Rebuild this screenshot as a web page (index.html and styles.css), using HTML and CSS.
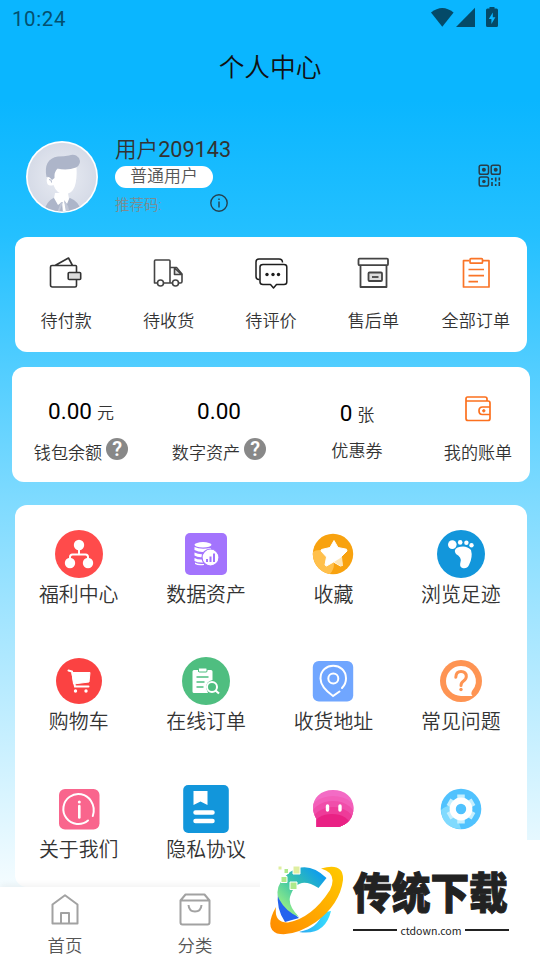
FILE: index.html
```
<!DOCTYPE html>
<html lang="zh-CN">
<head>
<meta charset="utf-8">
<title>个人中心</title>
<link rel="stylesheet" href="styles.css">
</head>
<body>
<div class="page">
  <header class="status">
    <span class="time">10:24</span>
    <svg class="status-icons" width="68" height="22" viewBox="0 0 68 22" fill="#044a68"><path d="M0 5.6Q11.300-3.500 22.600 5.600L11.300 19.800Z"/><path d="M44 0.800V20H25Z"/><path fill-rule="evenodd" d="M58.500 1.500V0h5v1.500h2q1.500 0 1.500 1.500v15.500q0 1.500-1.500 1.500h-9q-1.500 0-1.500-1.500V3q0-1.500 1.500-1.500ZM61.800 5.500L57.800 12h2.600v5l4-6.700h-2.600Z"/></svg>
  </header>
  <h1 class="title">个人中心</h1>

  <section class="profile">
    <svg class="avatar" width="72" height="72" viewBox="0 0 72 72">
      <defs><clipPath id="face"><circle cx="36" cy="36" r="34.500"/></clipPath><radialGradient id="avbg"><stop offset="0" stop-color="#e9ecf3"/><stop offset="1" stop-color="#d6dbe7"/></radialGradient></defs>
      <circle cx="36" cy="36" r="36" fill="#fff"/><circle cx="36" cy="36" r="34.300" fill="url(#avbg)"/>
      <g clip-path="url(#face)">
        <path d="M18 72Q19 61 29 56L36 62L44 57Q53 60 56 72Z" fill="#adb5c9"/>
        <path d="M29 52H42L43 58L41 63L38 59L41 72H37L36 61L32 64L28 57Z" fill="#fff"/>
        <path d="M37 61L33 72H31L35 61ZM38 59L42 65L44 72H40Z" fill="#c1c7d7"/>
        <path d="M29 28Q40 29 50.500 25.500Q52 52 40 53Q31 54 27.500 44Q21 46 20.700 40Q20.500 35 25 36Q29 33 29 28Z" fill="#fff"/>
        <path d="M20.500 36Q17 18 32 15.500Q38 15.500 43 14.500Q49 12 53 17Q56 23 50 26.500Q41 30 31.500 27.500Q28 31 28.500 37L26 39Q23 35 20.500 36Z" fill="#adb5c9"/>
        <path d="M23 38.500q3 0 2.500 3" fill="none" stroke="#adb5c9"/>
      </g>
    </svg>
    <div class="who">
      <div class="name">用户<span>209143</span></div>
      <div class="level">普通用户</div>
      <div class="invite"><span>推荐码:</span>
        <svg width="18" height="18" viewBox="0 0 18 18" fill="none" stroke="#26414e" stroke-width="1.400"><circle cx="9" cy="9" r="8.200"/><path d="M9 4.500v1.600M9 7.500v6"/></svg>
      </div>
    </div>
    <svg class="qr" width="24" height="24" viewBox="0 0 24 24" fill="none" stroke="#293d48" stroke-width="1.500"><rect x="1.200" y="1.200" width="9.300" height="9" rx="1.800"/><rect x="13.200" y="1.200" width="9" height="9" rx="1.800"/><rect x="1.200" y="13" width="9.300" height="9" rx="1.800"/><g fill="#293d48" stroke="none"><circle cx="5.900" cy="5.700" r="2"/><circle cx="17.700" cy="5.700" r="2"/><circle cx="5.900" cy="17.500" r="1.800"/></g><path d="M14 14v2M14 18v4M17.700 13.500v4M17.700 20v2M21.300 13.500v3M21.300 18v4" stroke-width="1.600"/></svg>
  </section>

  <section class="card orders">
    <div class="order"><svg width="40" height="40" viewBox="0 0 40 40" fill="none" stroke="#333" stroke-width="1.600" stroke-linejoin="round"><path d="M30.500 18V12.500Q30.500 11.500 29.500 11.500H6Q4.500 11.500 4.500 13V31Q4.500 33 6.500 33H29Q30.500 33 30.500 31.500V26M9 11.500L22.500 4L26.500 11.500"/><rect x="22.200" y="18.500" width="12.500" height="7" rx="1" fill="#ddd"/></svg><span>待付款</span></div>
    <div class="order"><svg width="40" height="40" viewBox="0 0 40 40" fill="none" stroke="#444" stroke-width="1.600" stroke-linejoin="round"><path d="M8.500 29H5.500V7Q5.500 6 6.500 6H20Q21 6 21 7V29H14.500M21 13.500H27.500L33 20V27.500Q33 29 31.500 29H30M23.500 29H21"/><path d="M25.500 14V20.500H32.500Z" fill="#ddd"/><circle cx="11.500" cy="29" r="3"/><circle cx="26.500" cy="29" r="3"/></svg><span>待收货</span></div>
    <div class="order"><svg width="40" height="40" viewBox="0 0 40 40" fill="none" stroke="#1d1d1d" stroke-width="1.500" stroke-linejoin="round"><path d="M8.500 25.500H8Q5 25.500 5 22.500V8Q5 5 8 5H28Q31.500 5 31.500 8.500"/><path d="M12 10.500H33Q35.800 10.500 35.800 13V28Q35.800 30.500 33 30.500H25.500L22.500 34L19.500 30.500H12Q9 30.500 9 28V13Q9 10.500 12 10.500Z"/><g fill="#1d1d1d" stroke="none"><circle cx="16" cy="20.500" r="1.700"/><circle cx="22" cy="20.500" r="1.700"/><circle cx="27.500" cy="20.500" r="1.700"/></g></svg><span>待评价</span></div>
    <div class="order"><svg width="40" height="40" viewBox="0 0 40 40" fill="none" stroke="#444" stroke-width="1.800" stroke-linejoin="round"><rect x="5.500" y="4.700" width="29.500" height="6.500" rx="1"/><path d="M7.500 11.500V33H33.500V11.500"/><rect x="15.500" y="18.500" width="13.500" height="8.500" rx="1" fill="#ddd"/><path d="M19 23H25.500"/></svg><span>售后单</span></div>
    <div class="order"><svg width="40" height="40" viewBox="0 0 40 40" fill="none" stroke="#fa7427" stroke-width="1.700" stroke-linejoin="round"><path d="M13 6.700H7.500V33H33V6.700H27"/><rect x="14" y="4.700" width="12.500" height="4.500" rx="1"/><path d="M12.500 15.500H28M12.500 21.700H28M12.500 27.700H22"/></svg><span>全部订单</span></div>
  </section>

  <section class="card wallet">
    <div class="asset"><div class="amount"><b>0.00</b><i>元</i></div><div class="caption">钱包余额<em>?</em></div></div>
    <div class="asset"><div class="amount"><b>0.00</b></div><div class="caption">数字资产<em>?</em></div></div>
    <div class="asset coupon"><div class="amount"><b>0</b><i>张</i></div><div class="caption">优惠券</div></div>
    <div class="asset"><div class="amount bill"><svg width="28" height="28" viewBox="0 0 28 28" fill="none" stroke="#fc701e" stroke-width="1.700" stroke-linejoin="round"><path d="M23 6V3.800Q23 2 21 2H3.500Q2 2 2 4V23.500Q2 25.500 4 25.500H24Q26 25.500 26 23.500V8Q26 6 24 6H2.500M26 12H18.500Q15 12 15 15.800T18.500 19.500H26"/><circle cx="19.800" cy="15.800" r="1.200" fill="#fc701e" stroke-width="1"/></svg></div><div class="caption">我的账单</div></div>
  </section>

  <section class="card menu">
    <div class="item"><svg viewBox="0 0 48 48"><circle cx="24" cy="24" r="24" fill="#ff4b4b"/><path d="M24 15V24M15 32V27Q15 24.500 17.500 24.500H30.500Q33 24.500 33 27V32" fill="none" stroke="#fff" stroke-width="2"/><g fill="#fff"><circle cx="24" cy="15" r="5.200"/><circle cx="15" cy="33" r="5.200"/><circle cx="33" cy="33" r="5.200"/></g></svg><span>福利中心</span></div>
    <div class="item"><svg viewBox="0 0 48 48"><rect x="3" y="3" width="42" height="42" rx="5" fill="#a374fd"/><g fill="#fff"><ellipse cx="21" cy="14.800" rx="8.500" ry="2.700"/><path d="M12.500 17Q18 20 29 18V20Q20 24 12.500 20ZM12.500 22.500Q17 25 23 24L22 27Q16 28 12.500 25.500ZM12.500 28Q16 30 21 29.500V32.500Q16 33 12.500 31ZM13 32.500Q16 34 22 34V35Q16 36 13 34Z"/><circle cx="28.500" cy="27.500" r="8.500" stroke="#a374fd" stroke-width="1.200"/></g><path d="M25 29V32M28.500 26.500V32M32 23.500V32" stroke="#a374fd" stroke-width="2"/></svg><span>数据资产</span></div>
    <div class="item"><svg viewBox="0 0 48 48"><defs><clipPath id="coin"><circle cx="24" cy="24" r="20.200"/></clipPath></defs><circle cx="24" cy="24" r="20.200" fill="#f8a20f"/><circle cx="11" cy="34" r="14" fill="#ffc04c" clip-path="url(#coin)"/><path d="M25 10.500L29 17.500L37.500 19.200L38 21L32 27L33 35.500L31.500 36L24.500 32L17.500 36L16 35L17.500 27L12 21L12.500 19.500L21 17.500Z" fill="#fff" stroke="#fff" stroke-linejoin="round"/><path d="M25 32L33 27L34 36H31.500Z" fill="#fee5b5"/></svg><span>收藏</span></div>
    <div class="item"><svg viewBox="0 0 48 48"><circle cx="24" cy="24" r="24" fill="#1296db"/><g fill="#fff"><circle cx="15.300" cy="14.600" r="4.300"/><circle cx="23.200" cy="12.400" r="2.300"/><circle cx="29.400" cy="12.800" r="2.200"/><circle cx="34.500" cy="15.300" r="2.200"/><path d="M19 24Q16 20 20.500 17.500Q29 14.500 34 20Q36 27 32 35Q30 39 25.500 38Q22 37 23.500 32Q25 27.500 19 24Z"/></g></svg><span>浏览足迹</span></div>

    <div class="item"><svg viewBox="0 0 48 48"><circle cx="24" cy="24" r="23" fill="#fb4242"/><path d="M13.500 13.500L17 14.500L20 29.500H33.500" fill="none" stroke="#fff" stroke-width="2" stroke-linecap="round"/><path d="M17 15.500H35L34 25L18.500 27Z" fill="#fff" stroke="#fff" stroke-linejoin="round"/><circle cx="20.500" cy="34" r="1.700" fill="#fff"/><circle cx="31" cy="34" r="1.700" fill="#fff"/></svg><span>购物车</span></div>
    <div class="item"><svg viewBox="0 0 48 48"><circle cx="24" cy="24" r="24" fill="#4fbe80"/><path d="M12 13H16V15H25V13H29Q30.500 13 30.500 14.500V23Q24 24 24 31L26 36H12Q10.500 36 10.500 34.500V14.500Q10.500 13 12 13Z" fill="#fff"/><rect x="16.500" y="11" width="8.500" height="4" rx="1" fill="#fff" stroke="#4fbe80"/><path d="M14.500 20H26.500M14.500 25H22.500M14.500 30H21.500" stroke="#4fbe80" stroke-width="1.700"/><circle cx="30" cy="30" r="5" fill="#4fbe80" stroke="#fff" stroke-width="2"/><path d="M33.500 33.500L37 36.500" stroke="#fff" stroke-width="2.200"/></svg><span>在线订单</span></div>
    <div class="item"><svg viewBox="0 0 48 48" fill="none" stroke="#fff" stroke-width="2"><rect x="3.800" y="4" width="40.400" height="40.500" rx="6" fill="#70a6ff" stroke="none"/><path d="M33 31Q37 27 37 21.500C37 4.500 11.500 4.500 11.500 21.500Q11.500 30 24 39L30.500 34.500" stroke-linecap="round"/><circle cx="24.300" cy="21.500" r="5"/></svg><span>收货地址</span></div>
    <div class="item"><svg viewBox="0 0 48 48"><circle cx="24" cy="24" r="21" fill="#fe9453"/><path d="M24 9A15 15 0 1 0 24 39H35.500Q33.500 37 35 34A15 15 0 0 0 24 9Z" fill="#fff"/><path d="M18.800 20.300Q19 14.500 24 14.500Q29.300 14.500 29.300 19.500Q29.300 22 26.500 24Q24 25.700 24 28.500" fill="none" stroke="#fe9453" stroke-width="3" stroke-linecap="round"/><circle cx="24" cy="32.500" r="1.700" fill="#fe9453"/></svg><span>常见问题</span></div>

    <div class="item"><svg viewBox="0 0 48 48"><rect x="4" y="4" width="40.500" height="40.500" rx="6" fill="#f9658d"/><path d="M37.800 31Q40.500 23 36 16A15 15 0 1 0 33 35.500" fill="none" stroke="#fff" stroke-width="2" stroke-linecap="round"/><path d="M24.300 21V32.500" stroke="#fff" stroke-width="2.600" stroke-linecap="round"/><circle cx="24.300" cy="17" r="1.500" fill="#fff"/></svg><span>关于我们</span></div>
    <div class="item"><svg viewBox="0 0 48 48"><rect x="1.200" y="0" width="45.600" height="48" rx="5" fill="#1296db"/><path d="M11.500 6H25.500V20L18.500 16.500L11.500 20Z" fill="#fff"/><path d="M13.500 27.500H30.500M13.500 36H30.500" stroke="#fff" stroke-width="4.500" stroke-linecap="round"/></svg><span>隐私协议</span></div>
    <div class="item"><svg viewBox="0 0 48 48"><defs><clipPath id="bubble"><path d="M24 5C36 5 44.500 12 44.500 23Q44.500 37 30 42H7.500V34C-1 20 7 5 24 5Z"/></clipPath></defs><g clip-path="url(#bubble)"><path fill="#f36bc5" d="M0 0H48V48H0Z"/><ellipse cx="24" cy="31" rx="25" ry="20" fill="#f35fb9"/><ellipse cx="24" cy="34" rx="23" ry="18" fill="#f04eaa"/><ellipse cx="24" cy="37" rx="21" ry="15" fill="#ee3b99"/><ellipse cx="23" cy="40" rx="18" ry="11" fill="#e92184"/></g><path d="M18.500 21V25M31 21V25" stroke="#fff" stroke-width="3.400" stroke-linecap="round"/></svg><span></span></div>
    <div class="item"><svg viewBox="0 0 48 48"><circle cx="24" cy="24" r="20.300" fill="#50c2fe"/><path d="M4 25Q10 20 15 21Q21 33 24 44Q5 43 4 25Z" fill="#80dafe"/><g stroke="#c6effe" stroke-width="7.500"><path d="M24 9.500V38.500M11.500 16.800L36.500 31.200M11.500 31.200L36.500 16.800"/></g><circle cx="24" cy="24" r="8.300" fill="#50c2fe" stroke="#fff" stroke-width="6.200"/></svg><span></span></div>
  </section>

  <nav class="tabs">
    <div class="tab"><svg width="36" height="36" viewBox="0 0 36 36" fill="none" stroke="#a2a2a2" stroke-width="2" stroke-linejoin="round"><path d="M5.500 12.500L18 3.300L30.500 12.500V31.500H5.500ZM14 31V21H22V31"/></svg><span>首页</span></div>
    <div class="tab"><svg width="36" height="36" viewBox="0 0 36 36" fill="none" stroke="#a2a2a2" stroke-width="2" stroke-linejoin="round"><path d="M3.500 8.500L8.500 2.500H27.500L32.500 8.500V30.500Q32.500 32.500 30.500 32.500H5.500Q3.500 32.500 3.500 30.500ZM3.500 8.500H32.500M11.500 13Q12 19.500 18 19.500T24.500 13"/></svg><span>分类</span></div>
  </nav>

  <aside class="brand">
    <svg class="brand-logo" width="76" height="72" viewBox="0 0 76 72">
      <defs><linearGradient id="ring" x1="0" y1="1" x2="1" y2="0"><stop stop-color="#ff8a00"/><stop offset="1" stop-color="#ffca00"/></linearGradient><linearGradient id="cee" x1="0" y1="1" x2="1" y2="0"><stop offset=".15" stop-color="#94ed87"/><stop offset=".5" stop-color="#39c4a8"/><stop offset=".9" stop-color="#0b9af2"/></linearGradient><linearGradient id="tail"><stop stop-color="#2ca6f0"/><stop offset="1" stop-color="#38e1ff"/></linearGradient></defs>
      <path d="M29 66Q48 62 52 48Q57 45 61 45Q55 70 29 66Z" fill="url(#tail)"/>
      <path d="M8 26Q6 43 15 56L29 52Q16 42 8 26Z" fill="#2463ee"/>
      <path d="M56.500 12Q38-6 20 6Q3 20 9 33Q16 46 29 51Q18 40 20 31Q27 8 48.500 22Z" fill="url(#cee)"/>
      <path d="M51 2.500Q74-4 73 14Q70 38 46 56Q24 71 7 67.500Q-6 62 6 41Q4 57 18 56.500Q42 52 60 24Q68 7 51 2.500Z" fill="url(#ring)"/>
      <g stroke="#fff" stroke-width="1"><path d="M23 0H30V8H23Z" fill="#dfeea0"/><path d="M14 2.500H18.500V7.500H14ZM11 10.500H17V16.500H11ZM20 16H27V23.500H20Z" fill="#aee98b"/><path d="M8 0H12V4H8Z" fill="#dfeea0"/></g>
    </svg>
    <div class="brand-copy"><div class="brand-name">传统下载</div><div class="brand-site">ctdown.com</div></div>
  </aside>
</div>
</body>
</html>
```
FILE: styles.css
```
* { box-sizing: border-box; }
body { margin: 0; font-family: Roboto, "Noto Sans CJK SC", sans-serif; font-weight: 350; color: #333; }
svg { display: block; flex: none; }
.page { position: relative; width: 540px; height: 960px; overflow: hidden; background: linear-gradient(#0ab6ff 100px, #24c0ff 235px, #80dbff 505px, #f4fcff 886px); }
.status { height: 36px; padding: 2px 41px 0 12px; display: flex; justify-content: space-between; align-items: center; }
.time { font-size: 20.5px; font-weight: 450; letter-spacing: .6px; color: #04506f; }
.status-icons { margin-top: -2px; }
.title { margin: 0; height: 62px; padding-top: 1px; line-height: 62px; text-align: center; font-size: 25.7px; font-weight: 350; color: #111; }
.profile { height: 139px; padding: 38px 38px 0 26px; display: flex; align-items: flex-start; }
.avatar { margin-top: 5px; }
.who { margin-left: 17px; flex: 1; }
.name { height: 30px; line-height: 28px; font-size: 21.6px; }
.name span { font-weight: 400; }
.level { width: 98px; height: 22px; line-height: 20px; border-radius: 11px; background: #fff; text-align: center; font-size: 16.9px; color: #555; }
.invite { width: 113px; height: 30px; display: flex; align-items: center; justify-content: space-between; font-size: 14.5px; color: #7e8b8f; }
.qr { margin-top: 28px; }
.card { background: #fff; border-radius: 12px; }
.orders { height: 115px; margin: 0 13px 0 15px; padding-top: 17px; display: grid; grid-template-columns: repeat(5, 1fr); }
.order { display: flex; flex-direction: column; align-items: center; font-size: 17.1px; line-height: 26px; }
.order svg { margin-bottom: 14px; }
.wallet { height: 115px; margin: 15px 10px 0 12px; padding-top: 27px; display: grid; grid-template-columns: 138px 138px 138px 1fr; }
.asset { display: flex; flex-direction: column; align-items: center; }
.amount { height: 34px; display: flex; align-items: center; gap: 5px; }
.amount b { font-size: 22.5px; font-weight: 400; color: #000; }
.amount i { font-size: 17px; font-style: normal; }
.bill { padding-bottom: 5px; }
.coupon .amount { padding-top: 4px; }
.coupon .caption { padding-bottom: 3px; }
.caption { height: 46px; display: flex; align-items: center; gap: 4px; font-size: 17.1px; }
.caption em { width: 22px; height: 22px; margin-top: -4px; line-height: 22px; border-radius: 50%; background: #888; color: #fff; text-align: center; font-style: normal; font-weight: 600; font-size: 20px; }
.menu { height: 382px; margin: 23px 13px 0 15px; padding-top: 25px; display: grid; grid-template-columns: repeat(4, 127.4px); grid-auto-rows: 127.4px; align-content: start; }
.item { display: flex; flex-direction: column; align-items: center; font-size: 19.9px; line-height: 36px; }
.item svg { width: 48px; height: 48px; }
.tabs { height: 73px; display: flex; background: #fff; box-shadow: 0 -2px 7px rgba(0, 0, 0, .06); position: relative; }
.tab { width: 130px; padding-top: 5px; display: flex; flex-direction: column; align-items: center; font-size: 17.4px; line-height: 36px; color: #555; }
.brand { position: absolute; right: 0; bottom: 0; width: 280px; height: 120px; padding: 26px 0 0 10px; display: flex; background: #fff; }
.brand-copy { width: 156px; margin-left: 7px; }
.brand-name { width: 170px; height: 52px; line-height: 49px; font-family: "Noto Sans CJK SC", sans-serif; font-size: 43px; font-weight: 900; color: #222; -webkit-text-stroke: 1px #222; transform: scaleX(.9); transform-origin: left; white-space: nowrap; }
.brand-site { display: flex; align-items: center; gap: 3px; height: 24px; font-family: "Noto Sans CJK SC", sans-serif; font-size: 10.600px; font-weight: 400; color: #222; }
.brand-site::before, .brand-site::after { content: ""; flex: 1; height: 2.5px; background: #222; }
```
